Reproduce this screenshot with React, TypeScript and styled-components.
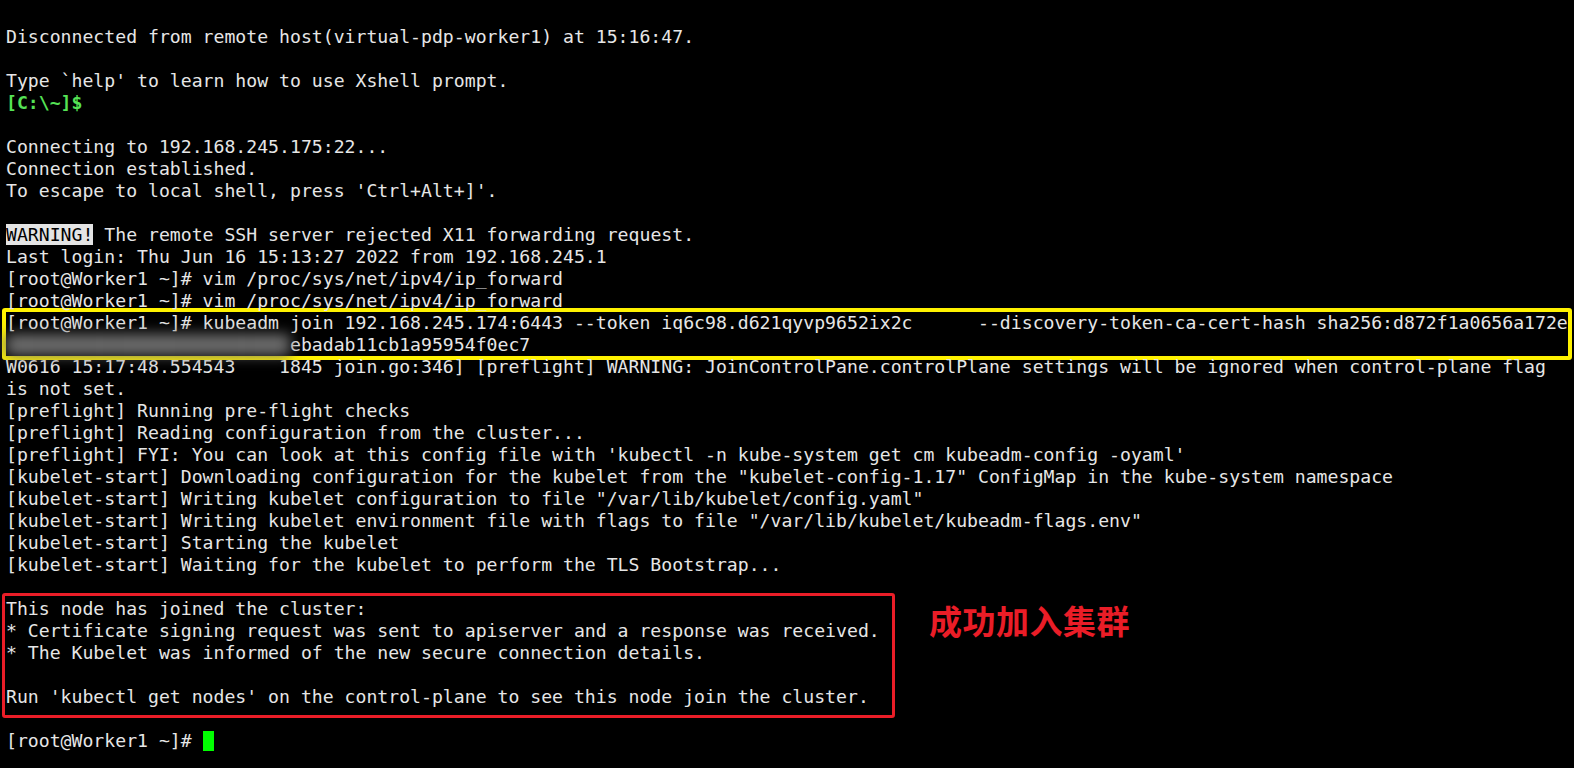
import React from "react";
import styled, { createGlobalStyle } from "styled-components";

const GlobalStyle = createGlobalStyle`
  html, body {
    margin: 0;
    padding: 0;
    background: #000;
  }
`;

const Terminal = styled.div`
  box-sizing: border-box;
  width: 100%;
  height: 100vh;
  overflow: hidden;
  background: #000;
  color: #e6e6e6;
  font-family: "DejaVu Sans Mono", "Liberation Mono", monospace;
  font-size: 18.15px;
  padding: 26px 6px 0 6px;
`;

const Line = styled.div`
  height: 22px;
  line-height: 22px;
  white-space: pre;
`;

const LocalPrompt = styled.span`
  color: #55e255;
  font-weight: bold;
`;

const Inverse = styled.span`
  background: #e4e4e4;
  color: #000;
`;

const Masked = styled.span`
  color: #6e6e6e;
  filter: blur(7px);
`;

const CommandBox = styled.div`
  margin: -4px -4px -4px -4px;
  border: 4px solid #fff200;
  border-radius: 3px;
`;

const ResultRow = styled.div`
  display: flex;
  align-items: flex-start;
`;

const ResultBox = styled.div`
  width: 886px;
  margin: -5px 0 12px -4px;
  padding: 2px 0 7px 1px;
  border: 3px solid #ea1d27;
  border-radius: 3px;
`;

const Note = styled.div`
  margin: 5px 0 0 34px;
  color: #ea1d27;
  font-family: "Noto Sans CJK SC", "Noto Sans", sans-serif;
  font-weight: 700;
  font-size: 33px;
  line-height: 34px;
  letter-spacing: 0.5px;
`;

const Cursor = styled.span`
  display: inline-block;
  width: 11px;
  height: 20px;
  background: #00ff00;
  vertical-align: -4px;
`;

const before = [
  "Disconnected from remote host(virtual-pdp-worker1) at 15:16:47.",
  "",
  "Type `help' to learn how to use Xshell prompt.",
];

const connecting = [
  "",
  "Connecting to 192.168.245.175:22...",
  "Connection established.",
  "To escape to local shell, press 'Ctrl+Alt+]'.",
  "",
];

const login = [
  "Last login: Thu Jun 16 15:13:27 2022 from 192.168.245.1",
  "[root@Worker1 ~]# vim /proc/sys/net/ipv4/ip_forward",
  "[root@Worker1 ~]# vim /proc/sys/net/ipv4/ip_forward",
];

const joinOutput = [
  "W0616 15:17:48.554543    1845 join.go:346] [preflight] WARNING: JoinControlPane.controlPlane settings will be ignored when control-plane flag",
  "is not set.",
  "[preflight] Running pre-flight checks",
  "[preflight] Reading configuration from the cluster...",
  "[preflight] FYI: You can look at this config file with 'kubectl -n kube-system get cm kubeadm-config -oyaml'",
  "[kubelet-start] Downloading configuration for the kubelet from the \"kubelet-config-1.17\" ConfigMap in the kube-system namespace",
  "[kubelet-start] Writing kubelet configuration to file \"/var/lib/kubelet/config.yaml\"",
  "[kubelet-start] Writing kubelet environment file with flags to file \"/var/lib/kubelet/kubeadm-flags.env\"",
  "[kubelet-start] Starting the kubelet",
  "[kubelet-start] Waiting for the kubelet to perform the TLS Bootstrap...",
  "",
];

const joined = [
  "This node has joined the cluster:",
  "* Certificate signing request was sent to apiserver and a response was received.",
  "* The Kubelet was informed of the new secure connection details.",
  "",
  "Run 'kubectl get nodes' on the control-plane to see this node join the cluster.",
];

export default function App() {
  return (
    <>
      <GlobalStyle />
      <Terminal>
        {before.map((text, i) => (
          <Line key={"b" + i}>{text}</Line>
        ))}
        <Line>
          <LocalPrompt>[C:\~]$</LocalPrompt>
        </Line>
        {connecting.map((text, i) => (
          <Line key={"c" + i}>{text}</Line>
        ))}
        <Line>
          <Inverse>WARNING!</Inverse> The remote SSH server rejected X11 forwarding request.
        </Line>
        {login.map((text, i) => (
          <Line key={"l" + i}>{text}</Line>
        ))}
        <CommandBox>
          <Line>
            {"[root@Worker1 ~]# kubeadm join 192.168.245.174:6443 --token iq6c98.d621qyvp9652ix2c      --discovery-token-ca-cert-hash sha256:d872f1a0656a172e"}
          </Line>
          <Line>
            <Masked>██████████████████████████</Masked>ebadab11cb1a95954f0ec7
          </Line>
        </CommandBox>
        {joinOutput.map((text, i) => (
          <Line key={"j" + i}>{text}</Line>
        ))}
        <ResultRow>
          <ResultBox>
            {joined.map((text, i) => (
              <Line key={"r" + i}>{text}</Line>
            ))}
          </ResultBox>
          <Note>成功加入集群</Note>
        </ResultRow>
        <Line>
          {"[root@Worker1 ~]# "}
          <Cursor />
        </Line>
      </Terminal>
    </>
  );
}
